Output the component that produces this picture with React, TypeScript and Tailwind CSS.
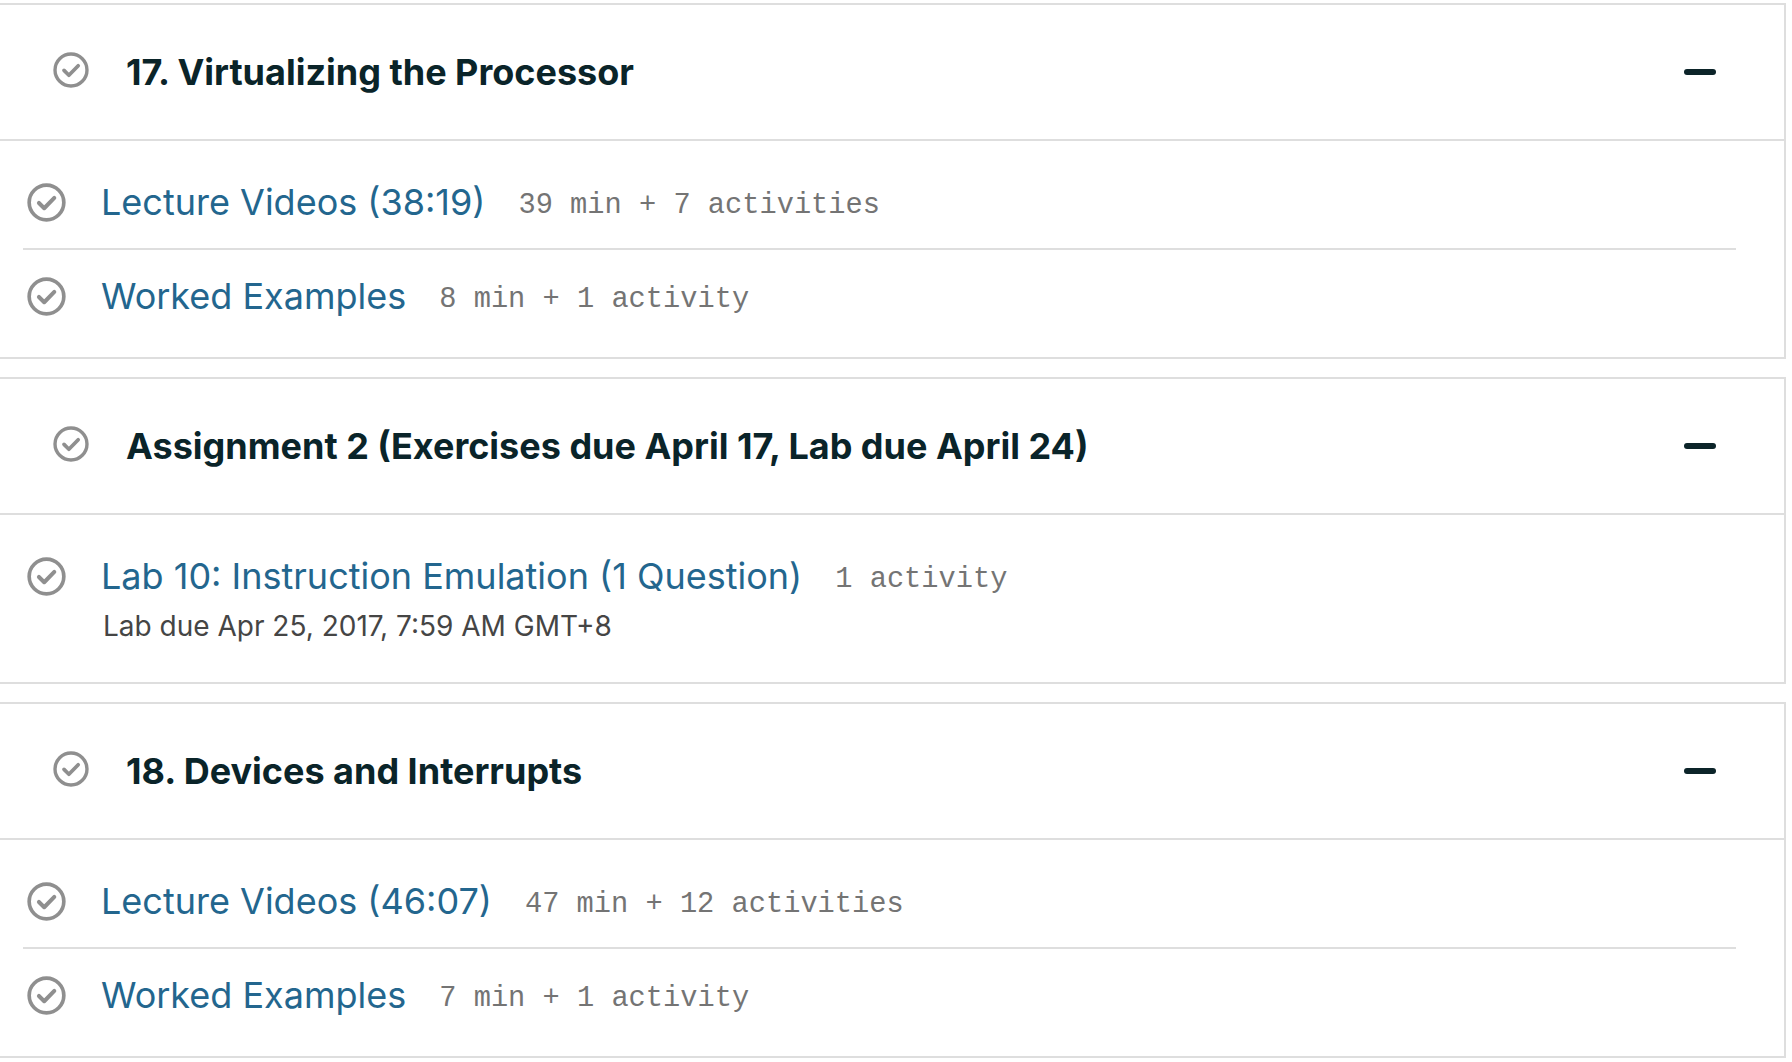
import React from "react";

const Check = ({ size }: { size: number }) => (
  <svg width={size} height={size} viewBox="0 0 34 34" className="shrink-0">
    <circle cx="17" cy="17" r="15.1" fill="none" stroke="#8f8f8f" strokeWidth="3.2" />
    <path
      d="M10.4 17.4 L15 22 L23.8 13"
      fill="none"
      stroke="#8f8f8f"
      strokeWidth="3.5"
      strokeLinecap="round"
      strokeLinejoin="round"
    />
  </svg>
);

type Item = { title: string; meta: string; date?: string };
type Section = { title: string; items: Item[] };

const sections: Section[] = [
  {
    title: "17. Virtualizing the Processor",
    items: [
      { title: "Lecture Videos (38:19)", meta: "39 min + 7 activities" },
      { title: "Worked Examples", meta: "8 min + 1 activity" },
    ],
  },
  {
    title: "Assignment 2 (Exercises due April 17, Lab due April 24)",
    items: [
      {
        title: "Lab 10: Instruction Emulation (1 Question)",
        meta: "1 activity",
        date: "Lab due Apr 25, 2017, 7:59 AM GMT+8",
      },
    ],
  },
  {
    title: "18. Devices and Interrupts",
    items: [
      { title: "Lecture Videos (46:07)", meta: "47 min + 12 activities" },
      { title: "Worked Examples", meta: "7 min + 1 activity" },
    ],
  },
];

export default function App() {
  return (
    <div className="bg-white min-h-screen w-[1792px] pt-[3px] font-['Inter',sans-serif]">
      <div className="w-[1786px] flex flex-col gap-[18px]">
        {sections.map((s) => (
          <div key={s.title} className="border-y-2 border-r-2 border-[#dedede] bg-white">
            <div className="h-[136px] flex items-center border-b-2 border-[#dedede] pl-[53px] pr-[68px]">
              <div className="mb-[4px]">
                <Check size={36} />
              </div>
              <h3 className="ml-[37px] text-[36px] leading-[44px] font-bold text-[#0a2429]">
                {s.title}
              </h3>
              <div className="ml-auto w-[32px] h-[6px] rounded-full bg-[#0c2429]" />
            </div>
            <ul className="py-[15px]">
              {s.items.map((it, i) => (
                <li
                  key={i}
                  className={
                    "ml-[23px] mr-[48px] pt-[24px] pb-[24px] pl-[4px] flex items-start " +
                    (i < s.items.length - 1 ? "border-b-2 border-[#dedede]" : "")
                  }
                >
                  <div className="h-[44px] flex items-center">
                    <Check size={39} />
                  </div>
                  <div className="ml-[35px] flex flex-col">
                    <div className="h-[44px] flex items-baseline gap-[33px] overflow-visible">
                      <span className="text-[36px] leading-[44px] text-[#23668e]">{it.title}</span>
                      <span className="font-['Liberation_Mono',monospace] text-[28.7px] leading-[44px] text-[#747474] -translate-y-[2px]">
                        {it.meta}
                      </span>
                    </div>
                    {it.date && (
                      <div className="mt-[11px] ml-[2px] h-[34px] text-[28px] leading-[34px] text-[#454545]">
                        {it.date}
                      </div>
                    )}
                  </div>
                </li>
              ))}
            </ul>
          </div>
        ))}
      </div>
    </div>
  );
}
